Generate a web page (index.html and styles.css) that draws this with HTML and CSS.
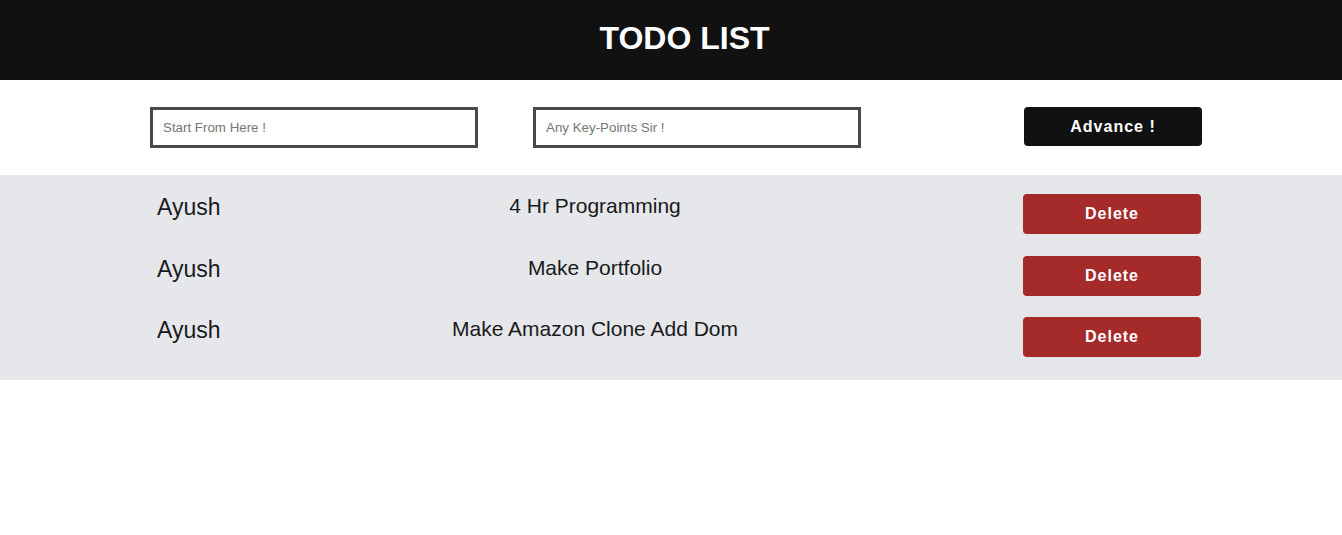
FILE: index.html
```html
<!DOCTYPE html>
<html lang="en">
<head>
<meta charset="UTF-8">
<title>Todo List</title>
<link rel="stylesheet" href="styles.css">
</head>
<body>
  <header class="topbar">
    <h1 class="title">TODO LIST</h1>
  </header>
  <section class="entry">
    <input class="field" type="text" placeholder="Start From Here !">
    <input class="field field-second" type="text" placeholder="Any Key-Points Sir !">
    <button class="btn btn-dark">Advance !</button>
  </section>
  <section class="list">
    <div class="row">
      <span class="name">Ayush</span>
      <span class="task">4 Hr Programming</span>
      <button class="btn btn-delete">Delete</button>
    </div>
    <div class="row">
      <span class="name">Ayush</span>
      <span class="task">Make Portfolio</span>
      <button class="btn btn-delete">Delete</button>
    </div>
    <div class="row">
      <span class="name">Ayush</span>
      <span class="task">Make Amazon Clone Add Dom</span>
      <button class="btn btn-delete">Delete</button>
    </div>
  </section>
</body>
</html>
```

FILE: styles.css
```css
* {
  box-sizing: border-box;
}

body {
  margin: 0;
  font-family: "Liberation Sans", Arial, sans-serif;
  background: #ffffff;
  color: #1a1a1a;
}

.topbar {
  height: 80px;
  background: #111111;
  display: flex;
  align-items: center;
  justify-content: center;
  padding-left: 27px;
  padding-bottom: 3px;
}

.title {
  margin: 0;
  color: #ffffff;
  font-size: 32px;
  font-weight: bold;
}

.entry {
  display: flex;
  align-items: flex-start;
  padding: 27px 140px 27px 150px;
}

.field {
  width: 328px;
  height: 41px;
  border: 3px solid #4a4a4a;
  padding: 0 10px;
  font-family: "Liberation Sans", Arial, sans-serif;
  font-size: 13.33px;
  color: #1a1a1a;
  background: #ffffff;
  outline: none;
}

.field::placeholder {
  color: #757575;
}

.field-second {
  margin-left: 55px;
}

.btn {
  width: 178px;
  border: none;
  border-radius: 4px;
  color: #ffffff;
  font-family: "Liberation Sans", Arial, sans-serif;
  font-size: 16px;
  font-weight: bold;
  letter-spacing: 1px;
  padding: 0;
  cursor: pointer;
}

.btn-dark {
  margin-left: auto;
  height: 39px;
  background: #111111;
}

.list {
  background: #e5e7eb;
  padding: 19px 141px 23px 157px;
  display: flex;
  flex-direction: column;
  gap: 21.5px;
}

.row {
  display: flex;
  align-items: flex-start;
}

.name {
  width: 200px;
  font-size: 23px;
}

.task {
  width: 476px;
  text-align: center;
  font-size: 21px;
}

.btn-delete {
  margin-left: auto;
  height: 40px;
  background: #a52a2a;
}
```
